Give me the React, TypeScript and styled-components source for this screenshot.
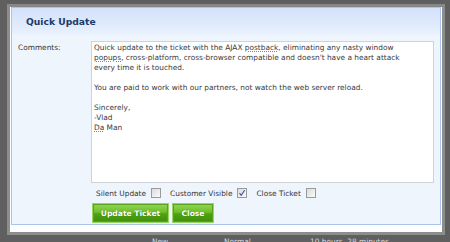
import React from 'react'
import styled, { createGlobalStyle } from 'styled-components'

const GlobalStyle = createGlobalStyle`
  html, body {
    margin: 0;
    padding: 0;
    background: #5f5f5f;
    overflow: hidden;
  }
  body {
    font-family: 'DejaVu Sans', Verdana, sans-serif;
    font-size: 7.4px;
    color: #333;
  }
`

const Page = styled.div`
  width: 450px;
  height: 242px;
  padding: 4px 0 0 7px;
  box-sizing: border-box;
`

const Modal = styled.div`
  width: 438px;
  box-sizing: border-box;
  border: 3px solid #8d8d8d;
  border-top-color: #878787;
  background: #fcfdff;
  padding: 0 1px 7px 1px;
`

const Panel = styled.div`
  border: 1px solid #a9c3ea;
  background: #eff5fd;
`

const Header = styled.div`
  height: 27px;
  display: flex;
  align-items: center;
  padding-left: 14px;
  background: linear-gradient(to bottom, #d3e1fa 0%, #e2ecfc 70%, #eaf2fd 100%);
`

const Title = styled.div`
  font-weight: bold;
  font-size: 9.2px;
  color: #1c3a6b;
`

const Body = styled.div`
  display: grid;
  grid-template-columns: 79px 343px;
  padding: 6px 0 0 0;
`

const Label = styled.div`
  padding: 2px 0 0 6px;
  color: #333;
`

const Field = styled.div`
  display: flex;
  flex-direction: column;
`

const TextBox = styled.div`
  height: 142px;
  box-sizing: border-box;
  background: #fff;
  border: 1px solid #cfd3d8;
  padding: 1px 2px;
  color: #3a3a3a;
`

const Line = styled.div`
  height: 10px;
  line-height: 10px;
  white-space: pre;
`

const Typo = styled.span`
  text-decoration: underline dotted #e06060;
  text-decoration-thickness: 1px;
  text-underline-offset: 1px;
`

const Options = styled.div`
  display: flex;
  align-items: center;
  height: 20px;
  padding-left: 5px;
  gap: 9px;
`

const Option = styled.label`
  display: flex;
  align-items: center;
  gap: 5px;
`

const Box = styled.span`
  width: 8px;
  height: 8px;
  border: 1px solid #9a9a9a;
  background: linear-gradient(to bottom right, #dcdcdc, #fafafa);
  display: flex;
  align-items: center;
  justify-content: center;
`

const Buttons = styled.div`
  display: flex;
  gap: 3px;
  padding: 0 0 1px 1px;
`

const Button = styled.button<{ $w: number }>`
  width: ${(p) => p.$w}px;
  height: 20px;
  border: 1px solid #9ad466;
  outline: 1px solid #5aa21e;
  outline-offset: -2px;
  background: linear-gradient(to bottom, #93d654 0%, #6dbf2a 45%, #4fa113 55%, #3f8e0a 100%);
  color: #fff;
  font-family: 'DejaVu Sans', Verdana, sans-serif;
  font-weight: bold;
  font-size: 7.6px;
  text-shadow: 0 0 1px #2d6a05;
  padding: 0;
  cursor: pointer;
`

const Behind = styled.div`
  display: flex;
  padding-left: 145px;
  margin-top: 2px;
  color: #d8d8d8;
  font-size: 7.4px;
`

const Cell = styled.div<{ $w: number }>`
  width: ${(p) => p.$w}px;
`

const Check = () => (
  <svg width="8" height="8" viewBox="0 0 8 8">
    <path d="M1.5 4.2 L3.2 6.3 L6.6 1.2" fill="none" stroke="#3a4fa0" strokeWidth="1.1" />
  </svg>
)

export default function App() {
  return (
    <Page>
      <GlobalStyle />
      <Modal>
        <Panel>
          <Header>
            <Title>Quick Update</Title>
          </Header>
          <Body>
            <Label>Comments:</Label>
            <Field>
              <TextBox>
                <Line>
                  Quick update to the ticket with the AJAX <Typo>postback</Typo>, eliminating any nasty window
                </Line>
                <Line>
                  <Typo>popups</Typo>, cross-platform, cross-browser compatible and doesn't have a heart attack
                </Line>
                <Line>every time it is touched.</Line>
                <Line />
                <Line>You are paid to work with our partners, not watch the web server reload.</Line>
                <Line />
                <Line>Sincerely,</Line>
                <Line>-Vlad</Line>
                <Line>
                  <Typo>Da</Typo> Man
                </Line>
              </TextBox>
              <Options>
                <Option>
                  Silent Update <Box />
                </Option>
                <Option>
                  Customer Visible{' '}
                  <Box>
                    <Check />
                  </Box>
                </Option>
                <Option>
                  Close Ticket <Box />
                </Option>
              </Options>
              <Buttons>
                <Button $w={77}>Update Ticket</Button>
                <Button $w={42}>Close</Button>
              </Buttons>
            </Field>
          </Body>
        </Panel>
      </Modal>
      <Behind>
        <Cell $w={72}>New</Cell>
        <Cell $w={86}>Normal</Cell>
        <Cell $w={100}>10 hours, 28 minutes</Cell>
      </Behind>
    </Page>
  )
}
